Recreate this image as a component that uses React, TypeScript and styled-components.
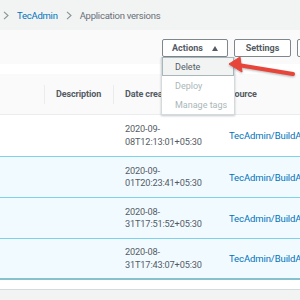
import styled, { createGlobalStyle } from 'styled-components';

type Version = {
  created: string;
  source: string;
  selected: boolean;
};

const versions: Version[] = [
  { created: '2020-09-08T12:13:01+05:30', source: 'TecAdmin/BuildArtifact.zip', selected: false },
  { created: '2020-09-01T20:23:41+05:30', source: 'TecAdmin/BuildArtifact.zip', selected: true },
  { created: '2020-08-31T17:51:52+05:30', source: 'TecAdmin/BuildArtifact.zip', selected: true },
  { created: '2020-08-31T17:43:07+05:30', source: 'TecAdmin/BuildArtifact.zip', selected: true },
];

const GlobalStyle = createGlobalStyle`
  html, body {
    margin: 0;
    padding: 0;
  }
  body {
    width: 300px;
    height: 300px;
    overflow: hidden;
    background: #f2f3f3;
    font-family: Roboto, "Liberation Sans", sans-serif;
    font-size: 9px;
    color: #545b64;
  }
`;

const Page = styled.div`
  position: relative;
  width: 300px;
  height: 300px;
  overflow: hidden;
`;

const Breadcrumbs = styled.nav`
  height: 30px;
  display: flex;
  align-items: center;
  gap: 8px;
  padding-left: 3px;
  font-size: 9.5px;
  letter-spacing: -0.25px;
  white-space: nowrap;
`;

const Crumb = styled.span<{ $link?: boolean }>`
  color: ${(p) => (p.$link ? '#0073bb' : '#687078')};
`;

const Panel = styled.div`
  background: #fff;
`;

const Toolbar = styled.div`
  height: 34px;
  box-sizing: border-box;
  background: #fafafa;
  display: flex;
  align-items: flex-start;
  gap: 6px;
  padding: 9px 0 0 162px;
`;

const ButtonWrap = styled.div`
  position: relative;
  flex: none;
`;

const Button = styled.button<{ $width: number }>`
  width: ${(p) => p.$width}px;
  height: 18px;
  box-sizing: border-box;
  border: 1px solid #7d878c;
  border-radius: 2px;
  background: #fff;
  color: #545b64;
  font-family: inherit;
  font-size: 9px;
  font-weight: 700;
  display: flex;
  align-items: center;
  justify-content: center;
  gap: 9px;
  padding: 0;
`;

const Menu = styled.ul`
  position: absolute;
  top: 18px;
  left: -1px;
  width: 72px;
  margin: 0;
  padding: 0;
  list-style: none;
  background: #fff;
  border: 1px solid #d5dbdb;
  border-top: none;
  box-shadow: 0 1px 2px rgba(0, 31, 63, 0.25);
  z-index: 2;
`;

const MenuItem = styled.li<{ $active?: boolean; $disabled?: boolean }>`
  height: 19px;
  box-sizing: border-box;
  display: flex;
  align-items: center;
  padding-left: 12px;
  font-size: 9px;
  white-space: nowrap;
  color: ${(p) => (p.$disabled ? '#aab7b8' : '#545b64')};
  background: ${(p) => (p.$active ? '#f2f3f3' : 'transparent')};
  border: 1px solid ${(p) => (p.$active ? '#aab7b8' : 'transparent')};
`;

const Spacer = styled.div`
  height: 10px;
  background: #fff;
`;

const Table = styled.div`
  display: grid;
  grid-template-columns: 44px 69px 104px 200px;
`;

const HeaderCell = styled.div<{ $divider?: boolean }>`
  position: relative;
  height: 41px;
  box-sizing: border-box;
  background: #fafafa;
  border-bottom: 1px solid #eaeded;
  display: flex;
  align-items: center;
  padding-left: 12px;
  font-weight: 700;
  letter-spacing: -0.1px;
  white-space: nowrap;
  overflow: hidden;

  &::before {
    content: '';
    display: ${(p) => (p.$divider ? 'block' : 'none')};
    position: absolute;
    left: 0;
    top: 11px;
    bottom: 10px;
    border-left: 1px solid #eaeded;
  }
`;

const Cell = styled.div<{ $selected: boolean; $last: boolean; $tall: boolean }>`
  height: ${(p) => (p.$tall ? 42 : 41)}px;
  box-sizing: border-box;
  display: flex;
  align-items: center;
  padding-left: 12px;
  background: ${(p) => (p.$selected ? '#f1faff' : '#fff')};
  border-bottom: ${(p) => (p.$last ? '2px solid #88c1ce' : '1px solid #7fd2ea')};
  white-space: nowrap;
`;

const DateText = styled.span`
  white-space: normal;
  width: 84px;
  line-height: 12.5px;
  font-size: 9.2px;
  letter-spacing: -0.15px;
`;

const Link = styled.a`
  color: #0073bb;
  text-decoration: none;
  font-size: 9.5px;
  letter-spacing: -0.1px;
`;

const Footer = styled.div`
  height: 9px;
  background: #fff;
  border-bottom: 1px solid #d5dbdb;
`;

const Arrow = styled.svg`
  position: absolute;
  left: 226px;
  top: 54px;
  z-index: 3;
  overflow: visible;
  filter: drop-shadow(0 1px 1px rgba(0, 0, 0, 0.3));
`;

const Chevron = () => (
  <svg width="6" height="9" viewBox="0 0 6 9">
    <path d="M1 0.8 L5 4.5 L1 8.2" fill="none" stroke="#879596" strokeWidth="1.1" />
  </svg>
);

const Caret = () => (
  <svg width="6" height="5" viewBox="0 0 6 5">
    <polygon points="3,0 6,5 0,5" fill="#545b64" />
  </svg>
);

const splitDate = (d: string) => [d.slice(0, 8), d.slice(8)];

const App = () => (
  <Page>
    <GlobalStyle />
    <Breadcrumbs>
      <Chevron />
      <Crumb $link>TecAdmin</Crumb>
      <Chevron />
      <Crumb>Application versions</Crumb>
    </Breadcrumbs>
    <Panel>
      <Toolbar>
        <ButtonWrap>
          <Button $width={66}>
            Actions <Caret />
          </Button>
          <Menu>
            <MenuItem $active>Delete</MenuItem>
            <MenuItem $disabled>Deploy</MenuItem>
            <MenuItem $disabled>Manage tags</MenuItem>
          </Menu>
        </ButtonWrap>
        <ButtonWrap>
          <Button $width={57}>Settings</Button>
        </ButtonWrap>
        <ButtonWrap>
          <Button $width={60}>Upload</Button>
        </ButtonWrap>
      </Toolbar>
      <Spacer />
      <Table>
        <HeaderCell />
        <HeaderCell $divider>Description</HeaderCell>
        <HeaderCell $divider>Date created</HeaderCell>
        <HeaderCell $divider>Source</HeaderCell>
        {versions.map((v, i) => {
          const last = i === versions.length - 1;
          const tall = i === 0;
          const [day, time] = splitDate(v.created);
          return [
            <Cell key={`c${i}`} $selected={v.selected} $last={last} $tall={tall} />,
            <Cell key={`d${i}`} $selected={v.selected} $last={last} $tall={tall} />,
            <Cell key={`t${i}`} $selected={v.selected} $last={last} $tall={tall}>
              <DateText>
                {day}
                <wbr />
                {time}
              </DateText>
            </Cell>,
            <Cell key={`s${i}`} $selected={v.selected} $last={last} $tall={tall}>
              <Link href="#">{v.source}</Link>
            </Cell>,
          ];
        })}
      </Table>
      <Footer />
    </Panel>
    <Arrow width="72" height="24" viewBox="0 0 72 24">
      <line x1="12" y1="11" x2="67" y2="20" stroke="#e8453a" strokeWidth="4" strokeLinecap="round" />
      <polygon points="3,10 14,3 16,18" fill="#e8453a" stroke="#e8453a" strokeWidth="1" strokeLinejoin="round" />
    </Arrow>
  </Page>
);

export default App;
